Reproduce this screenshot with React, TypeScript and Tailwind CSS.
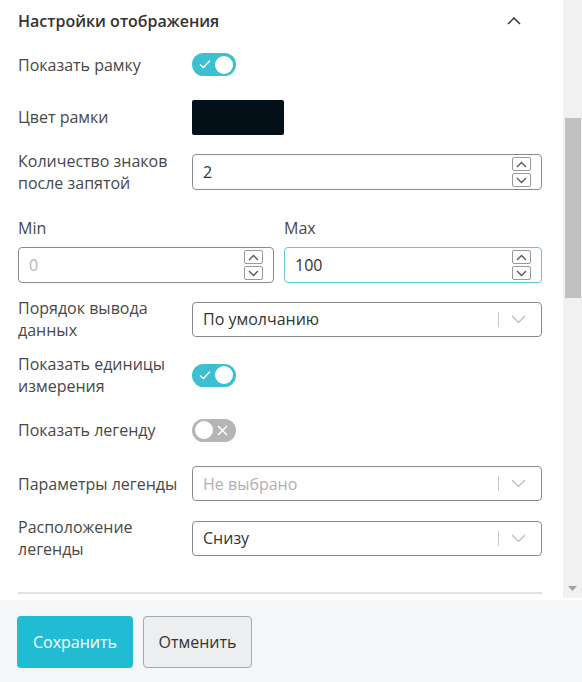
import React from "react";

const font = { fontFamily: '"Open Sans", "Noto Sans", sans-serif' };

function Toggle({ on }: { on: boolean }) {
  if (on) {
    return (
      <div className="relative w-[44px] h-[23px] rounded-full bg-[#3cbfd0]">
        <svg className="absolute left-[7px] top-[6px]" width="12" height="10" viewBox="0 0 12 10">
          <path d="M1 5.5 L4.5 8.5 L11 1.5" fill="none" stroke="white" strokeWidth="1.4" />
        </svg>
        <div className="absolute right-[3px] top-[2.5px] w-[18px] h-[18px] rounded-full bg-white" />
      </div>
    );
  }
  return (
    <div className="relative w-[44px] h-[23px] rounded-full bg-[#b4b6b6]">
      <div className="absolute left-[3px] top-[2.5px] w-[18px] h-[18px] rounded-full bg-white" />
      <svg className="absolute right-[8px] top-[6px]" width="11" height="11" viewBox="0 0 11 11">
        <path d="M1 1 L10 10 M10 1 L1 10" fill="none" stroke="white" strokeWidth="1.5" />
      </svg>
    </div>
  );
}

function Spinner() {
  return (
    <div className="flex flex-col gap-[2px] mr-[10px]">
      <div className="w-[19px] h-[14px] border border-[#9a9a9a] rounded-[2px] flex items-center justify-center bg-white">
        <svg width="11" height="7" viewBox="0 0 11 7">
          <path d="M1 6 L5.5 1.5 L10 6" fill="none" stroke="#555" strokeWidth="1.3" />
        </svg>
      </div>
      <div className="w-[19px] h-[14px] border border-[#9a9a9a] rounded-[2px] flex items-center justify-center bg-white">
        <svg width="11" height="7" viewBox="0 0 11 7">
          <path d="M1 1 L5.5 5.5 L10 1" fill="none" stroke="#555" strokeWidth="1.3" />
        </svg>
      </div>
    </div>
  );
}

function NumberInput({ value, placeholder, focused, className }: { value?: string; placeholder?: string; focused?: boolean; className?: string }) {
  return (
    <div
      className={
        "h-[36px] rounded-[4px] border flex items-center justify-between bg-white " +
        (focused ? "border-[#62c9d7] " : "border-[#8a8a8a] ") +
        (className ?? "")
      }
    >
      {value ? (
        <span className="pl-[10px] text-[16px] text-[#333]">{value}</span>
      ) : (
        <span className="pl-[10px] text-[16px] text-[#b5b5b5]">{placeholder}</span>
      )}
      <Spinner />
    </div>
  );
}

function Select({ value, placeholder }: { value?: string; placeholder?: string }) {
  return (
    <div className="h-[35px] w-[350px] rounded-[4px] border border-[#8a8a8a] flex items-center justify-between bg-white">
      {value ? (
        <span className="pl-[10px] text-[16px] text-[#333]">{value}</span>
      ) : (
        <span className="pl-[10px] text-[16px] text-[#b0b0b0]">{placeholder}</span>
      )}
      <div className="flex items-center mr-[15px]">
        <div className="w-px h-[15px] bg-[#c8c8c8] mr-[12px]" />
        <svg width="15" height="9" viewBox="0 0 15 9">
          <path d="M1 1 L7.5 7.5 L14 1" fill="none" stroke="#b8b8b8" strokeWidth="1.2" />
        </svg>
      </div>
    </div>
  );
}

function Label({ children }: { children: React.ReactNode }) {
  return <div className="w-[174px] text-[16px] leading-[22px] text-[#484848]">{children}</div>;
}

export default function App() {
  return (
    <div className="w-[582px] h-[682px] bg-white flex flex-col overflow-hidden" style={font}>
      <div className="flex h-[600px]">
        <div className="flex-1 pl-[18px] pr-[21px]">
          <div className="h-[41px] flex items-center justify-between">
            <span className="text-[16px] font-semibold text-[#333]">Настройки отображения</span>
            <svg className="mr-[21px]" width="14" height="9" viewBox="0 0 14 9">
              <path d="M1 8 L7 2 L13 8" fill="none" stroke="#333" strokeWidth="1.5" />
            </svg>
          </div>
          <div className="h-[47px] flex items-center">
            <Label>Показать рамку</Label>
            <Toggle on />
          </div>
          <div className="h-[58px] flex items-center">
            <Label>Цвет рамки</Label>
            <div className="w-[92px] h-[35px] rounded-[2px] bg-[#031017]" />
          </div>
          <div className="h-[52px] flex items-center">
            <Label>
              Количество знаков
              <br />
              после запятой
            </Label>
            <NumberInput value="2" className="w-[350px]" />
          </div>
          <div className="pt-[19px] grid grid-cols-[256px_258px] gap-x-[10px]">
            <div className="text-[16px] leading-[22px] text-[#484848]">Min</div>
            <div className="text-[16px] leading-[22px] text-[#484848]">Max</div>
            <NumberInput placeholder="0" className="mt-[8px]" />
            <NumberInput value="100" focused className="mt-[8px]" />
          </div>
          <div className="mt-[14px] h-[44px] flex items-center">
            <Label>
              Порядок вывода
              <br />
              данных
            </Label>
            <Select value="По умолчанию" />
          </div>
          <div className="mt-[12px] h-[44px] flex items-center">
            <Label>
              Показать единицы
              <br />
              измерения
            </Label>
            <Toggle on />
          </div>
          <div className="mt-[11px] h-[44px] flex items-center">
            <Label>Показать легенду</Label>
            <Toggle on={false} />
          </div>
          <div className="mt-[14px] h-[35px] flex items-center">
            <Label>Параметры легенды</Label>
            <Select placeholder="Не выбрано" />
          </div>
          <div className="mt-[15px] h-[44px] flex items-center">
            <Label>
              Расположение
              <br />
              легенды
            </Label>
            <Select value="Снизу" />
          </div>
          <div className="mt-[32px] h-[2px] bg-[#e2e2e2]" />
        </div>
        <div className="w-[19px] h-[598px] bg-[#f1f1f1] flex flex-col items-center">
          <div className="mt-[118px] w-[16px] h-[180px] bg-[#c1c1c1]" />
          <div className="flex-1" />
          <svg className="mb-[7px]" width="9" height="5" viewBox="0 0 9 5">
            <path d="M0 0 L9 0 L4.5 5 Z" fill="#a3a3a3" />
          </svg>
        </div>
      </div>
      <div className="flex-1 bg-[#f4f6f7] pt-[16px] pl-[17px] flex gap-[10px] items-start">
        <button className="h-[52px] w-[116px] rounded-[4px] bg-[#21bcd3] text-white text-[16px]">Сохранить</button>
        <button className="h-[52px] w-[109px] rounded-[4px] bg-[#eceef0] border border-[#a8a8a8] text-[#333] text-[16px]">Отменить</button>
      </div>
    </div>
  );
}
